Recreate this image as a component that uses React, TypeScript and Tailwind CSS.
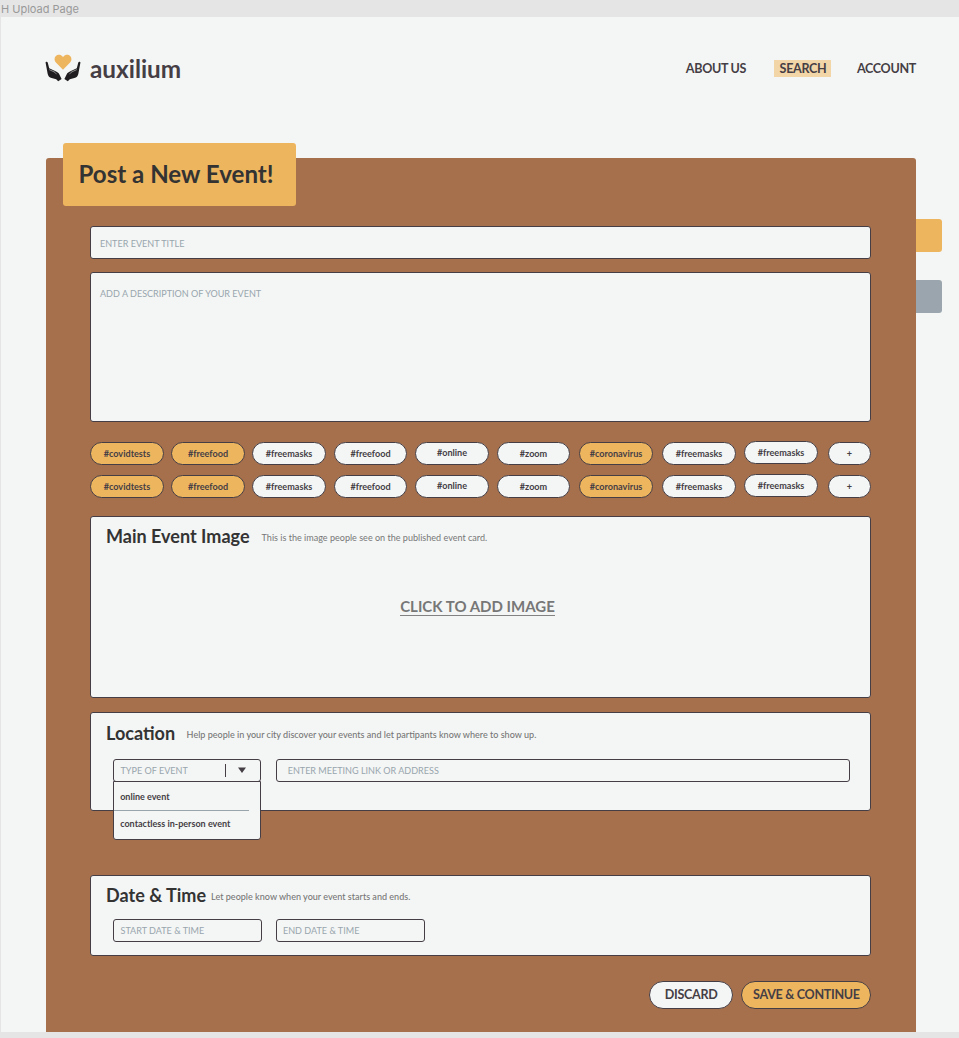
import type { ReactNode } from "react";

type Tag = { label: string; active?: boolean; className: string };

const TAGS: Tag[] = [
  { label: "#covidtests", active: true, className: "w-[74px]" },
  { label: "#freefood", active: true, className: "ml-[7px] w-[74px]" },
  { label: "#freemasks", className: "ml-[7px] w-[74px]" },
  { label: "#freefood", className: "ml-2 w-[73px]" },
  { label: "#online", className: "ml-[8px] w-[74px] pb-px" },
  { label: "#zoom", className: "ml-2 w-[73px]" },
  { label: "#coronavirus", active: true, className: "ml-[9px] w-[74px]" },
  { label: "#freemasks", className: "ml-[9px] w-[74px]" },
  { label: "#freemasks", className: "ml-2 -mt-px w-[74px]" },
  { label: "+", className: "ml-[10px] w-[43px]" },
];

function Hand() {
  return (
    <>
      <path d="M.6 8.8C.4 7.7 2.2 7.3 2.7 8.4l1.5 5.9 5.9 2.6c2 .8 3.6 1.8 4.3 3.5l2.2 4.6-3.4 2.2-2-2-4.6-1.1c-2.2-.7-3.3-2.1-3.9-4.2Z" fill="#201d20" />
      <path d="m4.2 15.6 5 2.3c1.3.6 1.6 1.5 2.2 2.3" fill="none" stroke="#f4f6f5" strokeWidth=".5" />
    </>
  );
}

function Logo() {
  return (
    <svg width="36" height="28" viewBox="0 0 36 28" className="shrink-0">
      <path
        d="M18 15.8 10.9 8.5C9.1 6.6 9.1 3.7 10.8 2c1.8-1.8 4.6-1.7 6.2 0l1 1.1L19 2c1.6-1.7 4.4-1.8 6.2 0 1.7 1.7 1.7 4.6-.1 6.5Z"
        fill="#eeb55f"
      />
      <Hand />
      <g transform="translate(36 0) scale(-1 1)">
        <Hand />
      </g>
    </svg>
  );
}

function Card({ className, children }: { className: string; children: ReactNode }) {
  return (
    <section className={`shrink-0 rounded-[3px] border border-[#453e45] bg-[#f4f6f5] ${className}`}>
      {children}
    </section>
  );
}

function TagRow({ className }: { className: string }) {
  return (
    <div className={`flex h-[23px] w-[781px] shrink-0 ${className}`}>
      {TAGS.map((tag, i) => (
        <button
          key={i}
          className={`flex h-[23px] shrink-0 items-center justify-center rounded-full border border-[#453e45] text-[9.1px] leading-[11px] font-bold text-[#453e45] ${
            tag.active ? "bg-[#eeb55f]" : "bg-[#f4f6f5]"
          } ${tag.className}`}
        >
          {tag.label}
        </button>
      ))}
    </div>
  );
}

function Heading({ children }: { children: ReactNode }) {
  return <h2 className="text-[18.05px] leading-[22px] font-bold text-[#333333]">{children}</h2>;
}

function Field({ className, children }: { className: string; children: ReactNode }) {
  return (
    <div
      className={`flex h-[23px] shrink-0 items-center rounded-[3px] border border-[#453e45] bg-[#f4f6f5] text-[9.05px] leading-[11px] text-[#98a5ad] ${className}`}
    >
      {children}
    </div>
  );
}

export default function App() {
  return (
    <div className="flex h-[1038px] w-[959px] flex-col overflow-hidden bg-[#e5e5e5] font-['Lato','Liberation_Sans',sans-serif]">
      <div className="h-[17px] shrink-0 pl-px font-['Inter','Liberation_Sans',sans-serif] text-[11px] leading-[18px] text-[#999999]">
        H Upload Page
      </div>
      <div className="ml-px flex h-[1015px] flex-col overflow-hidden bg-[#f4f6f5]">
        <header className="flex h-[141.4px] shrink-0 items-start justify-between pr-[43px] pl-[44px]">
          <div className="flex pt-[37px]">
            <Logo />
            <span className="ml-[9px] text-[24.3px] leading-[30px] font-bold text-[#453e45]">auxilium</span>
          </div>
          <nav className="flex pt-[43px] text-[12.55px] leading-[17px] font-bold tracking-[-0.32px] text-[#453e45]">
            <a>ABOUT US</a>
            <a className="ml-[28px] bg-[#f2d6a8] pr-[4.5px] pl-[5.5px]">SEARCH</a>
            <a className="ml-[26px]">ACCOUNT</a>
          </nav>
        </header>

        <div className="flex flex-1 pl-[44.6px]">
          <main className="flex w-[870.9px] shrink-0 flex-col rounded-t-[3px] bg-[#a6704c] pl-[44.4px]">
            <h1 className="-mt-[15px] -ml-[27px] flex h-[62.6px] w-[233px] shrink-0 items-center rounded-[3px] bg-[#eeb55f] pb-px pl-[15.5px] text-[24.1px] leading-[30px] font-bold text-[#333333]">
              Post a New Event!
            </h1>

            <Card className="mt-5 flex h-[33px] w-[781px] items-center pt-[2px] pl-[9px] text-[9.05px] leading-[11px] text-[#98a5ad]">
              ENTER EVENT TITLE
            </Card>
            <Card className="mt-[13px] h-[150px] w-[781px] pt-[15px] pl-[9px] text-[9.05px] leading-[11px] text-[#98a5ad]">
              ADD A DESCRIPTION OF YOUR EVENT
            </Card>

            <TagRow className="mt-5" />
            <TagRow className="mt-[10px]" />

            <Card className="mt-[18px] flex h-[182px] w-[781px] flex-col">
              <div className="flex items-start pt-[8px] pl-[15px]">
                <Heading>Main Event Image</Heading>
                <p className="mt-[7px] ml-3 text-[9.05px] leading-[11px] text-[#777777]">
                  This is the image people see on the published event card.
                </p>
              </div>
              <button className="mt-[50px] mr-[6px] self-center border-b border-[#828282] text-[15px] leading-[18px] font-bold text-[#777777]">
                CLICK TO ADD IMAGE
              </button>
            </Card>

            <Card className="mt-[14px] h-[99px] w-[781px]">
              <div className="flex items-start pt-[9px] pl-[15px]">
                <Heading>Location</Heading>
                <p className="mt-[7px] ml-[11.5px] text-[9.06px] leading-[11px] font-medium text-[#777777]">
                  Help people in your city discover your events and let partipants know where to show up.
                </p>
              </div>
              <div className="mt-[15px] flex pl-[22px]">
                <div className="relative">
                  <Field className="w-[148px] pl-[6.5px]">
                    <span>TYPE OF EVENT</span>
                    <span className="mr-[12px] ml-auto h-[13px] w-px bg-[#453e45]" />
                    <svg width="8" height="6" viewBox="0 0 8 6" className="mr-[13.5px]">
                      <path d="M0 .5h8L4 6Z" fill="#453e45" />
                    </svg>
                  </Field>
                  <ul className="absolute top-[22px] left-0 z-10 h-[59px] w-[148px] rounded-b-[3px] border border-[#453e45] bg-[#f4f6f5] text-[9.03px] leading-[11px] font-bold text-[#453e45]">
                    <li className="mr-[11px] h-[29px] border-b border-[#98a5ad] pt-[9px] pl-[6.2px]">online event</li>
                    <li className="pt-[7px] pl-[6.2px]">contactless in-person event</li>
                  </ul>
                </div>
                <Field className="ml-[15px] w-[574px] pl-[10.7px]">ENTER MEETING LINK OR ADDRESS</Field>
              </div>
            </Card>

            <Card className="mt-16 h-[81px] w-[781px]">
              <div className="flex items-start pt-[8px] pl-[15px]">
                <Heading>Date &amp; Time</Heading>
                <p className="mt-[7px] ml-[5px] text-[9.05px] leading-[11px] font-medium text-[#777777]">
                  Let people know when your event starts and ends.
                </p>
              </div>
              <div className="mt-[13px] flex gap-[14px] pl-[22px]">
                <Field className="w-[149px] pl-[6.5px]">START DATE &amp; TIME</Field>
                <Field className="w-[149px] pl-[6px]">END DATE &amp; TIME</Field>
              </div>
            </Card>

            <div className="mt-[25px] flex w-[781.4px] justify-end gap-[8px] text-[12.55px] leading-[15px] font-bold tracking-[-0.3px] text-[#453e45]">
              <button className="h-7 w-[84.5px] rounded-full border border-[#453e45] bg-[#f4f6f5] pb-px">DISCARD</button>
              <button className="h-7 w-[130px] rounded-full border border-[#453e45] bg-[#eeb55f] pb-px whitespace-nowrap">
                SAVE &amp; CONTINUE
              </button>
            </div>
          </main>

          <aside className="flex flex-col gap-7 pt-[61px]">
            <div className="h-[33px] w-[25.5px] rounded-r-[3px] bg-[#eeb55f]" />
            <div className="h-[33px] w-[25.5px] rounded-r-[3px] bg-[#9aa5ad]" />
          </aside>
        </div>
      </div>
    </div>
  );
}
